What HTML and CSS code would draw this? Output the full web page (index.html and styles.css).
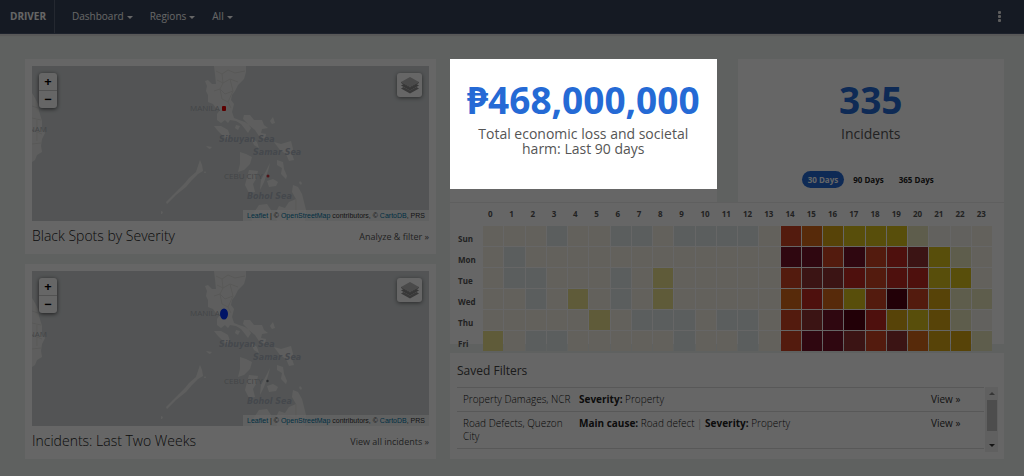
FILE: index.html
```html
<!DOCTYPE html>
<html lang="en">
<head>
<meta charset="utf-8">
<meta name="viewport" content="width=device-width, initial-scale=1">
<title>DRIVER</title>
<link rel="stylesheet" href="styles.css">
</head>
<body>
<svg class="defs" aria-hidden="true">
  <defs>
    <g id="land">
      <path d="M0 27L3 32L6 38L7 45L10 55L10 62L13 67L10 73L9 80L10 86L5 89L3 94L0 96Z"/>
      <path d="M182 0L183 8L184 18L180 18L176 14L173 15L175 20L174 25L176 29L176 36L181 38L184 42L188 44L185 48L185 54L189 57L193 54L196 57L198 54L204 55L209 58L213 63L216 67L219 62L215 57L211 53L212 49L218 49L222 54L230 54L232 59L236 62L230 63L229 67L234 68L233 73L227 70L223 64L218 60L213 56L207 54L202 52L200 46L202 38L199 34L200 29L203 25L206 19L212 13L214 6L214 0Z"/>
      <path d="M182 60L189 60L196 64L198 70L195 74L190 69L186 65Z"/>
      <path d="M238 55L241 51L243 57L240 58Z"/>
      <path d="M204 59L208 60L206 64L203 62Z"/>
      <path d="M219 72L225 76L227 82L222 79Z"/>
      <path d="M242 76L249 78L259 75L261 83L260 88L262 94L257 95L254 88L248 84Z"/>
      <path d="M245 94L251 96L252 103L255 110L254 113L249 108L250 102L245 99Z"/>
      <path d="M208 86L214 88L220 91L218 98L212 104L206 106L208 98Z"/>
      <path d="M217 104L226 105L224 113L221 118L223 126L217 127L213 119Z"/>
      <path d="M238 97L236 105L232 116L228 124L229 114L234 105Z"/>
      <path d="M235 115L241 113L246 116L244 120L237 121Z"/>
      <path d="M261 119L266 121L270 128L272 136L274 144L273 155L245 155L243 148L247 140L253 142L257 136L264 133L260 126Z"/>
      <path d="M223 145L227 139L235 138L239 144L238 155L220 155L219 150Z"/>
      <path d="M168 94L170 99L171 105L166 108L160 114L154 121L144 129L135 138L134 136L141 129L147 123L153 117L157 112L164 106Z"/>
      <path d="M174 80L180 81L178 83L176 82ZM129 145L131 146L130 148L129 148ZM268 115L270 117L269 119L267 117ZM173 105L174 107L172 107Z"/>
    </g>
    <g id="bounds">
      <path d="M184 5L190 8L196 4L203 7L213 5M185 14L191 17L198 13L206 16M182 25L188 23L193 28L201 25M190 8L191 17L188 23L190 33L196 36M198 13L201 25L196 36L199 42M0 40L6 42M0 52L9 54M0 64L10 68M0 78L9 77M5 54L5 75M245 148L255 145L264 148L272 145M255 145L257 155M264 133L264 148"/>
    </g>
    <g id="places">
      <text class="city" x="15" y="66" text-anchor="end">VIETNAM</text>
      <text class="city" x="158" y="45">MANILA</text>
      <text class="city" x="192" y="113">CEBU CITY</text>
      <text class="sea" x="187" y="76">Sibuyan Sea</text>
      <text class="sea" x="221" y="89">Samar Sea</text>
      <text class="sea" x="215" y="133">Bohol Sea</text>
    </g>
    <g id="layers">
      <path fill="#8f8f8f" d="M1 13.500L10 18.500L19 13.500L16.500 12L10 15.500L3.500 12Z"/>
      <path fill="#8a8a8a" d="M1 10.500L10 15.500L19 10.500L16.500 9L10 12.500L3.500 9Z"/>
      <path fill="#b9b9b9" d="M10 2L19 7L10 12L1 7Z"/>
      <path fill="#8f8f8f" d="M1 7L10 12L19 7L19 8L10 13L1 8Z"/>
    </g>
  </defs>
</svg>

<header class="topbar">
  <a class="brand" href="#">DRIVER</a>
  <nav class="menu" aria-label="Main">
    <button type="button">Dashboard <span class="caret"></span></button>
    <button type="button">Regions <span class="caret"></span></button>
    <button type="button">All <span class="caret"></span></button>
  </nav>
  <button class="more" type="button" aria-label="More options"><span></span><span></span><span></span></button>
</header>

<main class="dashboard">
  <div class="maps">
    <section class="card map-card">
      <div class="map">
        <svg class="map-art" viewBox="0 0 397 155" preserveAspectRatio="xMinYMid slice" role="img" aria-label="Black spots map">
          <use href="#land" class="land"/><use href="#bounds" class="bounds"/><use href="#places"/>
          <rect x="190" y="40" width="4" height="5" rx="1" fill="#e60000"/>
          <circle cx="236" cy="110" r="1.5" fill="#c8323c"/>
        </svg>
        <div class="zoom"><button type="button" aria-label="Zoom in">+</button><button type="button" aria-label="Zoom out">−</button></div>
        <button class="layers" type="button" aria-label="Layers"><svg viewBox="0 0 20 20"><use href="#layers"/></svg></button>
        <p class="credit"><a href="#">Leaflet</a> | © <a href="#">OpenStreetMap</a> contributors, © <a href="#">CartoDB</a>, PRS</p>
      </div>
      <footer class="map-foot"><h2>Black Spots by Severity</h2><a href="#">Analyze &amp; filter »</a></footer>
    </section>
    <section class="card map-card">
      <div class="map">
        <svg class="map-art" viewBox="0 0 397 155" preserveAspectRatio="xMinYMid slice" role="img" aria-label="Recent incidents map">
          <use href="#land" class="land"/><use href="#bounds" class="bounds"/><use href="#places"/>
          <ellipse cx="192" cy="43" rx="4" ry="5.5" fill="#0032ff"/>
          <circle cx="235.500" cy="110" r="1.200" fill="#70757c"/>
        </svg>
        <div class="zoom"><button type="button" aria-label="Zoom in">+</button><button type="button" aria-label="Zoom out">−</button></div>
        <button class="layers" type="button" aria-label="Layers"><svg viewBox="0 0 20 20"><use href="#layers"/></svg></button>
        <p class="credit"><a href="#">Leaflet</a> | © <a href="#">OpenStreetMap</a> contributors, © <a href="#">CartoDB</a>, PRS</p>
      </div>
      <footer class="map-foot"><h2>Incidents: Last Two Weeks</h2><a href="#">View all incidents »</a></footer>
    </section>
  </div>

  <div class="stats">
    <div class="figures">
      <section class="card figure">
        <p class="number">₱468,000,000</p>
        <p class="label">Total economic loss and societal harm: Last 90 days</p>
        <div class="spotlight"></div>
      </section>
      <section class="card figure">
        <p class="number">335</p>
        <p class="label">Incidents</p>
        <div class="ranges">
          <button class="active" type="button">30 Days</button>
          <button type="button">90 Days</button>
          <button type="button">365 Days</button>
        </div>
      </section>
    </div>

    <section class="card heat" aria-label="Incidents by day and hour">
      <table>
        <thead><tr><th class="day"></th><th>0</th><th>1</th><th>2</th><th>3</th><th>4</th><th>5</th><th>6</th><th>7</th><th>8</th><th>9</th><th>10</th><th>11</th><th>12</th><th>13</th><th>14</th><th>15</th><th>16</th><th>17</th><th>18</th><th>19</th><th>20</th><th>21</th><th>22</th><th>23</th></tr></thead>
        <tbody>
          <tr><th>Sun</th><td></td><td></td><td></td><td class="n"></td><td></td><td></td><td class="n"></td><td class="n"></td><td></td><td class="n"></td><td class="n"></td><td class="n"></td><td class="n"></td><td></td><td class="h6"></td><td class="h5"></td><td class="h4"></td><td class="h3"></td><td class="h3"></td><td class="h3"></td><td class="h1"></td><td class="h0"></td><td class="h0"></td><td></td></tr>
          <tr><th>Mon</th><td></td><td class="n"></td><td></td><td></td><td></td><td></td><td></td><td></td><td></td><td></td><td></td><td></td><td></td><td></td><td class="h9"></td><td class="h9"></td><td class="h6"></td><td class="h9"></td><td class="h6"></td><td class="h7"></td><td class="h8"></td><td class="h3"></td><td class="h1"></td><td></td></tr>
          <tr><th>Tue</th><td></td><td class="n"></td><td class="n"></td><td></td><td></td><td></td><td class="n"></td><td></td><td class="h2"></td><td></td><td></td><td></td><td></td><td></td><td class="h6"></td><td class="h8"></td><td class="h8"></td><td class="h7"></td><td class="h6"></td><td class="h7"></td><td class="h7"></td><td class="h3"></td><td class="h3"></td><td></td></tr>
          <tr><th>Wed</th><td></td><td></td><td class="n"></td><td></td><td class="h2"></td><td></td><td class="n"></td><td></td><td class="h2"></td><td></td><td></td><td></td><td></td><td></td><td class="h5"></td><td class="h7"></td><td class="h5"></td><td class="h3"></td><td class="h6"></td><td class="h10"></td><td class="h6"></td><td class="h4"></td><td class="h1"></td><td class="h1"></td></tr>
          <tr><th>Thu</th><td></td><td></td><td></td><td></td><td></td><td class="h2"></td><td></td><td class="n"></td><td class="n"></td><td class="n"></td><td></td><td class="n"></td><td class="n"></td><td></td><td class="h6"></td><td class="h8"></td><td class="h9"></td><td class="h10"></td><td class="h7"></td><td class="h4"></td><td class="h3"></td><td class="h4"></td><td class="h1"></td><td class="h0"></td></tr>
          <tr><th>Fri</th><td class="h2"></td><td></td><td class="n"></td><td class="n"></td><td></td><td></td><td></td><td></td><td></td><td class="n"></td><td></td><td></td><td class="n"></td><td></td><td class="h6"></td><td class="h9"></td><td class="h9"></td><td class="h8"></td><td class="h6"></td><td class="h8"></td><td class="h5"></td><td class="h4"></td><td class="h4"></td><td class="h1"></td></tr>
        </tbody>
      </table>
    </section>

    <section class="card saved">
      <h2>Saved Filters</h2>
      <div class="scroller">
        <table>
          <tbody>
            <tr><td class="name">Property Damages, NCR</td><td><b>Severity:</b> Property</td><td class="view"><a href="#">View »</a></td></tr>
            <tr><td class="name">Road Defects, Quezon City</td><td><b>Main cause:</b> Road defect <i>|</i> <b>Severity:</b> Property</td><td class="view"><a href="#">View »</a></td></tr>
          </tbody>
        </table>
        <div class="scrollbar" aria-hidden="true"><span class="up"></span><span class="thumb"></span><span class="down"></span></div>
      </div>
    </section>
  </div>
</main>
</body>
</html>
```

FILE: styles.css
```css
* { box-sizing: border-box; }
html { overflow: hidden; }
body {
  margin: 0;
  min-height: 100vh;
  background: #edf3f0;
  color: #444;
  font-family: "Open Sans", "Noto Sans", sans-serif;
  font-size: 10px;
  line-height: 13px;
}
h2, p { margin: 0; }
a { color: inherit; text-decoration: none; }
button {
  margin: 0;
  padding: 0;
  border: 0;
  background: none;
  color: inherit;
  font: inherit;
}
.defs { position: absolute; width: 0; height: 0; }

/* Top bar */
.topbar {
  display: flex;
  align-items: stretch;
  height: 34px;
  background: #364358;
  border-bottom: 1px solid #4a566e;
  box-shadow: 0 2px 1px #dcdcdc;
  color: #fff;
}
.brand {
  display: flex;
  align-items: center;
  padding: 0 8px 0 10px;
  border-right: 1px solid #5a6579;
  font-weight: 700;
}
.menu { display: flex; gap: 17px; padding-left: 17px; }
.menu button { display: flex; align-items: center; gap: 3px; }
.caret {
  margin-top: 2px;
  border: 3px solid transparent;
  border-top-color: #fff;
  border-bottom: 0;
}
.more {
  display: flex;
  flex-direction: column;
  justify-content: center;
  gap: 1px;
  margin-left: auto;
  padding: 0 23px;
}
.more span { width: 3px; height: 3px; border-radius: 1px; background: #e8e8e8; }

/* Page grid */
.dashboard {
  display: grid;
  grid-template-columns: 411fr 554fr;
  gap: 14px;
  padding: 25px 20px 17px 25px;
}
.card { background: #fff; }
.maps { display: flex; flex-direction: column; gap: 10px; }
.stats { display: flex; flex-direction: column; min-width: 0; }

/* Maps */
.map-card { padding: 7px 7px 0; }
.map { position: relative; height: 155px; overflow: hidden; background: #cfd3d5; }
.map-art { display: block; width: 100%; height: 100%; }
.land { fill: #ececea; }
.bounds { fill: none; stroke: #dddddb; stroke-width: 1; }
.city { fill: #a9adb2; font-size: 8px; }
.sea { fill: #acb3bf; font-family: "DejaVu Sans", sans-serif; font-size: 8px; font-style: italic; font-weight: 700; }
.zoom {
  position: absolute;
  top: 7px;
  left: 7px;
  display: flex;
  flex-direction: column;
  width: 18px;
  border-radius: 3px;
  background: #fff;
  box-shadow: 0 1px 4px rgba(0, 0, 0, .65);
  color: #000;
  font-size: 13px;
  font-weight: 700;
}
.zoom button { height: 17px; line-height: 15px; }
.zoom button + button { border-top: 1px solid #ccc; height: 18px; }
.layers {
  position: absolute;
  top: 7px;
  right: 7px;
  display: grid;
  place-items: center;
  width: 25px;
  height: 24px;
  border-radius: 3px;
  background: #fff;
  box-shadow: 0 1px 4px rgba(0, 0, 0, .5);
}
.layers svg { width: 20px; height: 20px; }
.credit {
  position: absolute;
  right: 0;
  bottom: 0;
  padding: 0 4px;
  background: rgba(255, 255, 255, .7);
  color: #333;
  font-family: "Liberation Sans", Arial, sans-serif;
  font-size: 7px;
  line-height: 11px;
}
.credit a { color: #0078a8; }
.map-foot { display: flex; align-items: center; justify-content: space-between; height: 33px; padding-bottom: 3px; color: #222; }
.map-foot h2 { font-size: 14px; font-weight: 300; line-height: 18px; }
.map-foot a { color: #555; font-size: 9px; }

/* Figures */
.figures { display: grid; grid-template-columns: 1fr 1fr; gap: 21px; }
.figure { position: relative; height: 143px; padding: 18px 20px 0; text-align: center; }
.number { color: #256ad5; font-size: 37px; font-weight: 700; line-height: 46px; margin: 0 -10px; }
.label { margin-top: 3px; color: #555; font-size: 14px; line-height: 15px; }
.spotlight {
  position: absolute;
  z-index: 10;
  inset: 0 0 13px;
  box-shadow: 0 0 0 100vmax rgba(0, 0, 0, .6);
  pointer-events: none;
}
.ranges { display: flex; justify-content: center; gap: 3px; margin-top: 30px; }
.ranges button { height: 17px; padding: 0 6px; border-radius: 9px; color: #222; font-size: 8px; font-weight: 700; }
.ranges .active { background: #256ad5; color: #fff; }

/* Heat map */
.heat { height: 142px; margin-bottom: 9px; padding: 0 11px 0 7px; border-top: 1px solid #eee; }
.heat table { width: 100%; table-layout: fixed; border-spacing: 1px; }
.heat th { padding: 0; color: #555; font-size: 8px; font-weight: 700; line-height: 12px; text-align: left; }
.heat thead th { height: 21px; padding: 0 0 2px 5px; }
.heat .day { width: 24px; }
.heat tbody th { padding-top: 6px; }
.heat td { height: 20px; padding: 0; background: #f7f2e5; }
.heat .n { background: #e4ebec; }
.heat .h0 { background: #f5f2ec; }
.heat .h1 { background: #ece8bf; }
.heat .h2 { background: #ede38e; }
.heat .h3 { background: #dcc21c; }
.heat .h4 { background: #d9a914; }
.heat .h5 { background: #d9691b; }
.heat .h6 { background: #cf4524; }
.heat .h7 { background: #c22a22; }
.heat .h8 { background: #933232; }
.heat .h9 { background: #75122a; }
.heat .h10 { background: #550012; }

/* Saved filters */
.saved { height: 106px; padding: 9px 6px 0 7px; }
.saved h2 { font-size: 12px; font-weight: 400; line-height: 17px; }
.scroller { display: flex; gap: 1px; height: 65px; margin-top: 8px; overflow: hidden; }
.saved table { flex: 1; align-self: flex-start; table-layout: fixed; border-collapse: collapse; color: #111; font-weight: 300; }
.saved tr { border-top: 1px solid #ddd; border-bottom: 1px solid #ddd; }
.saved td { padding: 5px 0 5px 6px; vertical-align: top; }
.saved b { color: #222; font-weight: 700; }
.saved .name { width: 116px; }
.saved .view { width: 59px; color: #333; font-weight: 400; }
.saved i { color: #999; font-style: normal; }
.scrollbar {
  display: flex;
  flex-direction: column;
  align-items: center;
  width: 13px;
  padding: 5px 0;
  background: #f1f1f1;
}
.up { border: 3px solid transparent; border-top: 0; border-bottom-color: #888; }
.thumb { width: 10px; height: 31px; margin: 5px 0 auto; background: #c1c1c1; }
.down { border: 3px solid transparent; border-bottom: 0; border-top-color: #333; }
```
